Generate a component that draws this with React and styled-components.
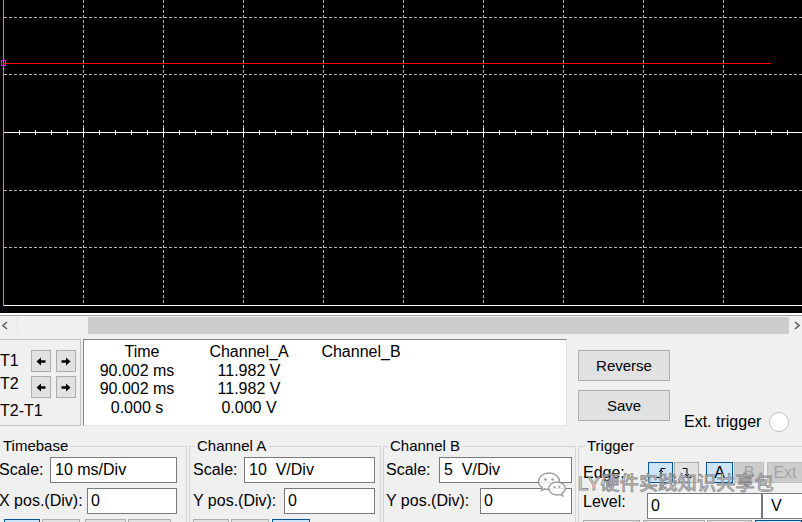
import React from "react";
import styled, { createGlobalStyle } from "styled-components";

const GlobalStyle = createGlobalStyle`
  html, body { margin: 0; padding: 0; background: #f0f0f0; }
  body { font-family: "Liberation Sans", Arial, sans-serif; }
`;

const Window = styled.div`
  position: relative;
  width: 802px;
  height: 522px;
  overflow: hidden;
  background: #f0f0f0;
  font-family: "Liberation Sans", Arial, sans-serif;
  font-size: 16px;
  color: #000;
`;

const Screen = styled.div`
  height: 313px;
  background: #000;
  svg { display: block; }
`;

const ScreenEdge = styled.div`
  height: 2px;
  background: #fff;
  border-bottom: 1px solid #a0a0a0;
`;

const ScrollBar = styled.div`
  display: flex;
  height: 18px;
`;

const ScrollButton = styled.div`
  width: ${(p) => p.$w}px;
  flex: none;
  display: flex;
  align-items: center;
  justify-content: ${(p) => (p.$right ? "flex-end" : "flex-start")};
  padding: 0 2px;
  box-sizing: border-box;
  border-right: ${(p) => (p.$right ? "none" : "1px solid #e4e4e4")};
`;

const ScrollTrack = styled.div`
  flex: 1;
  padding-left: 70px;
`;

const ScrollThumb = styled.div`
  width: 701px;
  height: 17px;
  margin-top: 1px;
  background: #cdcdcd;
`;

const TopRow = styled.div`
  display: flex;
  align-items: flex-start;
  height: 92px;
  padding-top: 5px;
  box-sizing: border-box;
`;

const CursorBox = styled.div`
  margin-left: -1px;
  width: 82px;
  height: 87px;
  box-sizing: border-box;
  border: 1px solid #c4c4c4;
  padding-top: 10px;
  display: grid;
  grid-template-columns: 26px 20px 20px;
  grid-template-rows: 22px 22px 18px;
  column-gap: 5px;
  row-gap: 4px;
`;

const CursorLabel = styled.div`
  line-height: ${(p) => p.$lh}px;
  align-self: start;
  grid-column: ${(p) => (p.$wide ? "1 / -1" : "auto")};
  white-space: nowrap;
`;

const ArrowButton = styled.div`
  background: #e1e1e1;
  border: 1px solid #adadad;
  box-sizing: border-box;
  display: flex;
  align-items: center;
  justify-content: center;
`;

const Readout = styled.div`
  margin-left: 2px;
  width: 484px;
  height: 87px;
  box-sizing: border-box;
  background: #fff;
  border: 1px solid;
  border-color: #828282 #e3e3e3 #e3e3e3 #828282;
  padding-top: 3px;
  display: grid;
  grid-template-columns: 106px 118px 106px;
  grid-auto-rows: 18.5px;
  line-height: 18.5px;
`;

const Cell = styled.div`
  text-align: center;
  white-space: nowrap;
  padding-left: ${(p) => p.$shift || 0}px;
`;

const ButtonColumn = styled.div`
  margin: 11px 0 0 11px;
  display: flex;
  flex-direction: column;
  gap: 9px;
`;

const PushButton = styled.div`
  width: 92px;
  height: 31px;
  box-sizing: border-box;
  background: #e1e1e1;
  border: 1px solid #adadad;
  display: flex;
  align-items: center;
  justify-content: center;
  font-size: 15px;
`;

const ExtTrigger = styled.div`
  margin: 73px 0 0 14px;
  display: flex;
  align-items: center;
  gap: 8px;
  white-space: nowrap;
`;

const Radio = styled.div`
  width: 20px;
  height: 20px;
  box-sizing: border-box;
  border-radius: 50%;
  border: 1px solid #c2c2c2;
  background: #fff;
`;

const BottomRow = styled.div`
  display: flex;
  gap: 2px;
  margin-top: 12px;
`;

const Group = styled.fieldset`
  margin: 0 0 0 ${(p) => p.$ml || 0}px;
  width: ${(p) => p.$w}px;
  flex: none;
  height: 130px;
  box-sizing: border-box;
  min-width: 0;
  border: 1px solid #d5d5d5;
  padding: 3px ${(p) => p.$pr}px 0 ${(p) => p.$pl}px;
`;

const Legend = styled.legend`
  margin-left: 2px;
  padding: 0 2px;
  font-size: 15px;
  line-height: 16px;
`;

const FieldRow = styled.div`
  display: flex;
  justify-content: space-between;
  align-items: center;
  height: 26px;
  margin-bottom: 5px;
  white-space: nowrap;
`;

const Field = styled.div`
  width: ${(p) => p.$w}px;
  height: 26px;
  box-sizing: border-box;
  flex: none;
  background: #fff;
  border: 1px solid #7a7a7a;
  padding-left: ${(p) => p.$pad ?? 4}px;
  line-height: 24px;
  white-space: pre;
`;

const Strip = styled.div`
  display: flex;
  margin-top: ${(p) => p.$mt}px;
`;

const StripButton = styled.div`
  width: ${(p) => p.$w}px;
  margin-left: ${(p) => p.$ml || 0}px;
  height: 20px;
  flex: none;
  box-sizing: border-box;
  background: ${(p) => (p.$on ? "#cce4f7" : "#e1e1e1")};
  border: 1px solid ${(p) => (p.$on ? "#005499" : "#adadad")};
`;

const TrigRow = styled.div`
  display: flex;
  align-items: ${(p) => p.$align};
  height: ${(p) => p.$h}px;
  margin-top: ${(p) => p.$mt || 0}px;
  white-space: nowrap;
`;

const TrigLabel = styled.div`
  width: ${(p) => p.$w}px;
  flex: none;
  line-height: ${(p) => p.$lh}px;
`;

const ModeButton = styled.div`
  width: ${(p) => p.$w}px;
  margin-left: ${(p) => p.$ml || 0}px;
  height: 21px;
  flex: none;
  box-sizing: border-box;
  display: flex;
  align-items: center;
  justify-content: center;
  font-size: 16px;
  background: ${(p) => (p.$state === "on" ? "#cce4f7" : p.$state === "off" ? "#cccccc" : "#e1e1e1")};
  border: 1px solid
    ${(p) => (p.$state === "on" ? "#005499" : p.$state === "off" ? "#bfbfbf" : "#adadad")};
  color: ${(p) => (p.$state === "off" ? "#a3a3a3" : "#000")};
`;

const Watermark = styled.div`
  position: absolute;
  left: 537px;
  top: 471px;
  display: flex;
  align-items: center;
  gap: 11px;
  pointer-events: none;
`;

const WatermarkText = styled.span`
  font-family: "Liberation Sans", "Noto Sans CJK SC", sans-serif;
  font-size: 19px;
  line-height: 24px;
  color: rgba(255, 255, 255, 0.75);
  -webkit-text-stroke: 1px rgba(110, 110, 110, 0.75);
  letter-spacing: 0.3px;
`;

// scope drawing
const gridX = Array.from({ length: 9 }, (_, i) => 83 + 80 * i);
const gridY = [17, 74, 190, 247];
const ticks = Array.from({ length: 50 }, (_, i) => 3 + 16 * (i + 1)).filter((x) => x < 802);

const ScopeDisplay = () => (
  <svg width="802" height="313" viewBox="0 0 802 313">
    {gridX.map((x) => (
      <line key={"v" + x} x1={x + 0.5} y1="0" x2={x + 0.5} y2="305" stroke="#b4b4b4" strokeDasharray="3 2" />
    ))}
    {gridY.map((y) => (
      <line key={"h" + y} x1="4" y1={y + 0.5} x2="802" y2={y + 0.5} stroke="#b4b4b4" strokeDasharray="3 2" />
    ))}
    <line x1="3" y1="132.5" x2="802" y2="132.5" stroke="#fff" />
    {ticks.map((x) => {
      const major = (x - 3) % 80 === 0;
      return (
        <line
          key={"t" + x}
          x1={x + 0.5}
          y1={major ? 128 : 130}
          x2={x + 0.5}
          y2={major ? 137 : 135}
          stroke="#fff"
        />
      );
    })}
    <line x1="3" y1="305.5" x2="802" y2="305.5" stroke="#fff" />
    <line x1="3.5" y1="0" x2="3.5" y2="306" stroke="#3cdc3c" />
    <line x1="3" y1="63.5" x2="771" y2="63.5" stroke="#ff0000" />
    <rect x="1.5" y="60.5" width="4" height="5" fill="none" stroke="#ff00ff" />
  </svg>
);

const Chevron = ({ right }) => (
  <svg width="6" height="9" viewBox="0 0 6 9">
    <path d={right ? "M1 1 L5 4.5 L1 8" : "M5 1 L1 4.5 L5 8"} fill="none" stroke="#606060" strokeWidth="1.6" />
  </svg>
);

const Arrow = ({ right }) => (
  <svg width="10" height="9" viewBox="0 0 10 9" style={{ transform: right ? "scaleX(-1)" : "none" }}>
    <path d="M0.5 4.5 L5 0.5 V3.3 H9.5 V5.7 H5 V8.5 Z" fill="#000" />
  </svg>
);

const EdgeIcon = ({ falling }) => (
  <svg width="12" height="12" viewBox="0 0 12 12">
    <path
      d={falling ? "M1.5 1.5 H6 V10.5 H10.5" : "M1.5 10.5 H6 V1.5 H10.5"}
      fill="none"
      stroke="#000"
      strokeWidth="1"
    />
    <path d={falling ? "M4 7 L6 9 L8 7" : "M4 5 L6 3 L8 5"} fill="none" stroke="#000" strokeWidth="1" />
  </svg>
);

const WeChat = () => (
  <svg width="30" height="26" viewBox="0 0 30 26">
    <path
      d="M12 2 C6 2 1.5 5.8 1.5 10.3 C1.5 12.9 3 15.1 5.2 16.6 L4.4 19.6 L8 17.8 C9.3 18.2 10.6 18.4 12 18.4 C18 18.4 22.5 14.7 22.5 10.3 C22.5 5.8 18 2 12 2 Z"
      fill="rgba(255,255,255,0.8)"
      stroke="#9a9a9a"
      strokeWidth="1.3"
    />
    <path
      d="M20 11 C15.3 11 11.8 14 11.8 17.5 C11.8 21 15.3 24 20 24 C21 24 22 23.8 22.9 23.5 L25.8 25 L25.1 22.4 C27 21.2 28.3 19.5 28.3 17.5 C28.3 14 24.7 11 20 11 Z"
      fill="rgba(255,255,255,0.8)"
      stroke="#9a9a9a"
      strokeWidth="1.3"
    />
    <circle cx="8.5" cy="8.5" r="1.3" fill="#9a9a9a" />
    <circle cx="15.5" cy="8.5" r="1.3" fill="#9a9a9a" />
    <circle cx="17.5" cy="16" r="1" fill="#9a9a9a" />
    <circle cx="22.5" cy="16" r="1" fill="#9a9a9a" />
  </svg>
);

const readHead = ["Time", "Channel_A", "Channel_B"];
const readRows = [
  ["90.002 ms", "11.982 V", ""],
  ["90.002 ms", "11.982 V", ""],
  ["0.000 s", "0.000 V", ""],
];

const channels = [
  { name: "Timebase", ml: -6, w: 193, pl: 4, pr: 9, scale: "10 ms/Div", sw: 127, pos: "X pos.(Div):", pw: 90,
    strip: [{ w: 36, ml: 5, on: true }, { w: 38, ml: 2 }, { w: 41, ml: 5 }, { w: 43, ml: 2 }] },
  { name: "Channel A", w: 192, pl: 3, pr: 5, scale: "10  V/Div", sw: 131, pos: "Y pos.(Div):", pw: 91,
    strip: [{ w: 36 }, { w: 38, ml: 2 }, { w: 38, ml: 3, on: true }] },
  { name: "Channel B", w: 193, pl: 2, pr: 3, scale: "5  V/Div", sw: 133, pos: "Y pos.(Div):", pw: 92, strip: [] },
];

const trigStrip = [{ w: 57 }, { w: 62, ml: 3 }, { w: 45, ml: 2 }, { w: 47, ml: 3, on: true }];

const App = () => {
  return (
    <>
      <GlobalStyle />
      <Window>
        <Screen>
          <ScopeDisplay />
        </Screen>
        <ScreenEdge />
        <ScrollBar>
          <ScrollButton $w={18}>
            <Chevron />
          </ScrollButton>
          <ScrollTrack>
            <ScrollThumb />
          </ScrollTrack>
          <ScrollButton $w={13} $right>
            <Chevron right />
          </ScrollButton>
        </ScrollBar>

        <TopRow>
          <CursorBox>
            <CursorLabel $lh={22}>T1</CursorLabel>
            <ArrowButton>
              <Arrow />
            </ArrowButton>
            <ArrowButton>
              <Arrow right />
            </ArrowButton>
            <CursorLabel $lh={16}>T2</CursorLabel>
            <ArrowButton>
              <Arrow />
            </ArrowButton>
            <ArrowButton>
              <Arrow right />
            </ArrowButton>
            <CursorLabel $lh={18} $wide>
              T2-T1
            </CursorLabel>
          </CursorBox>

          <Readout>
            {readHead.map((h, i) => (
              <Cell key={h} $shift={i === 0 ? 10 : 0}>
                {h}
              </Cell>
            ))}
            {readRows.map((row, r) => row.map((v, c) => <Cell key={r + "-" + c}>{v}</Cell>))}
          </Readout>

          <ButtonColumn>
            <PushButton>Reverse</PushButton>
            <PushButton>Save</PushButton>
          </ButtonColumn>

          <ExtTrigger>
            Ext. trigger
            <Radio />
          </ExtTrigger>
        </TopRow>

        <BottomRow>
          {channels.map((ch) => (
            <Group key={ch.name} $ml={ch.ml} $w={ch.w} $pl={ch.pl} $pr={ch.pr}>
              <Legend>{ch.name}</Legend>
              <FieldRow>
                Scale:
                <Field $w={ch.sw}>{ch.scale}</Field>
              </FieldRow>
              <FieldRow>
                {ch.pos}
                <Field $w={ch.pw} $pad={3}>
                  0
                </Field>
              </FieldRow>
              <Strip $mt={1}>
                {ch.strip.map((b, i) => (
                  <StripButton key={i} $w={b.w} $ml={b.ml} $on={b.on} />
                ))}
              </Strip>
            </Group>
          ))}

          <Group $w={260} $pl={4} $pr={0}>
            <Legend>Trigger</Legend>
            <TrigRow $align="flex-end" $h={26}>
              <TrigLabel $w={65} $lh={20}>
                Edge:
              </TrigLabel>
              <ModeButton $w={25} $state="on">
                <EdgeIcon />
              </ModeButton>
              <ModeButton $w={25} $ml={1}>
                <EdgeIcon falling />
              </ModeButton>
              <ModeButton $w={27} $ml={7} $state="on">
                A
              </ModeButton>
              <ModeButton $w={30} $ml={1} $state="off">
                B
              </ModeButton>
              <ModeButton $w={36} $ml={3} $state="off">
                Ext
              </ModeButton>
            </TrigRow>
            <TrigRow $align="flex-start" $h={26} $mt={10}>
              <TrigLabel $w={64} $lh={18}>
                Level:
              </TrigLabel>
              <Field $w={115} $pad={3}>
                0
              </Field>
              <Field $w={60} $pad={8}>
                V
              </Field>
            </TrigRow>
            <Strip $mt={1}>
              {trigStrip.map((b, i) => (
                <StripButton key={i} $w={b.w} $ml={b.ml} $on={b.on} />
              ))}
            </Strip>
          </Group>
        </BottomRow>

        <Watermark>
          <WeChat />
          <WatermarkText>LY硬件实践知识共享包</WatermarkText>
        </Watermark>
      </Window>
    </>
  );
};

export default App;
